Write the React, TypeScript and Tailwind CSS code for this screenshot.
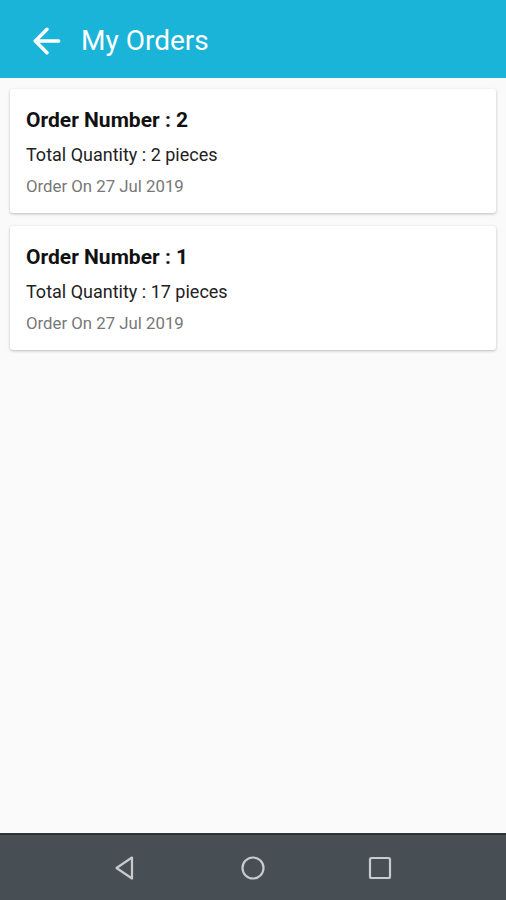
import { ArrowLeft } from "lucide-react";

const orders = [
  { number: 2, quantity: 2, date: "27 Jul 2019" },
  { number: 1, quantity: 17, date: "27 Jul 2019" },
];

function OrderCard({ number, quantity, date }: { number: number; quantity: number; date: string }) {
  return (
    <div className="bg-white rounded-[3px] shadow-[0_1px_3px_rgba(0,0,0,0.25)] px-4 pt-[19px] pb-[17px]">
      <p className="text-[21px] leading-[24px] font-bold text-[#111]">Order Number : {number}</p>
      <p className="text-[18px] leading-[20px] text-[#222] mt-[13px]">Total Quantity : {quantity} pieces</p>
      <p className="text-[16.8px] leading-[20px] text-[#777] mt-[11px]">Order On {date}</p>
    </div>
  );
}

export default function App() {
  return (
    <div className="w-[506px] h-[900px] flex flex-col bg-[#fafafa]" style={{ fontFamily: "Roboto, 'Noto Sans', sans-serif" }}>
      <header className="h-[78px] bg-[#1ab4d8] flex items-center pl-[27px] pt-[3px] gap-[14px] shrink-0">
        <ArrowLeft className="text-white w-[40px] h-[40px]" strokeWidth={2.1} />
        <h1 className="text-white text-[28px]">My Orders</h1>
      </header>
      <main className="flex-1 flex flex-col gap-[13px] px-[10px] pt-[11px]">
        {orders.map(o => (
          <OrderCard key={o.number} {...o} />
        ))}
      </main>
      <nav className="h-[67px] bg-[#474e54] border-t-[2px] border-[#2c3438] flex items-center justify-center gap-[101px] shrink-0">
        <svg width="26" height="26" viewBox="0 0 26 26" fill="none" stroke="#c8cacc" strokeWidth="2.2" strokeLinejoin="round">
          <path d="M19 2.5 L3.5 13 L19 23.5 Z" />
        </svg>
        <svg width="26" height="26" viewBox="0 0 26 26" fill="none" stroke="#c8cacc" strokeWidth="2.2">
          <circle cx="13" cy="13" r="10.5" />
        </svg>
        <svg width="26" height="26" viewBox="0 0 26 26" fill="none" stroke="#c8cacc" strokeWidth="2.2">
          <rect x="3" y="3" width="20" height="20" rx="1.5" />
        </svg>
      </nav>
    </div>
  );
}
